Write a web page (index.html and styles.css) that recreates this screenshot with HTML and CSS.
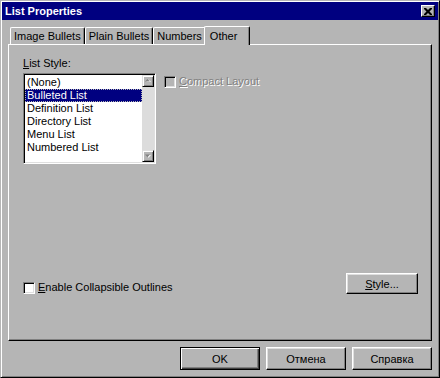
FILE: index.html
```html
<!DOCTYPE html>
<html lang="en">

<head>
    <meta charset="UTF-8">
    <title>List Properties</title>
    <link rel="stylesheet" href="styles.css">
</head>

<body>

    <div class="window">

        <div class="titlebar">
            <span class="title">List Properties</span>
            <button class="close">
                <svg width="8" height="7" viewBox="0 0 8 7">
                    <path d="M0 0h2l2 2 2-2h2v1l-2.5 2.5 2.5 2.5v1h-2l-2-2-2 2h-2v-1l2.5-2.5-2.5-2.5z" fill="#000"/>
                </svg>
            </button>
        </div>

        <div class="tabs">
            <div class="tab">Image Bullets</div>
            <div class="tab">Plain Bullets</div>
            <div class="tab">Numbers</div>
            <div class="tab active">Other</div>
        </div>

        <div class="panel">

            <div class="top-row">
                <div class="list-group">
                    <div class="label"><u>L</u>ist Style:</div>
                    <div class="listbox">
                        <ul class="items">
                            <li>(None)</li>
                            <li class="selected">Bulleted List</li>
                            <li>Definition List</li>
                            <li>Directory List</li>
                            <li>Menu List</li>
                            <li>Numbered List</li>
                        </ul>
                        <div class="scrollbar">
                            <div class="arrow">
                                <svg width="6" height="4" viewBox="0 0 6 4">
                                    <path d="M1 3h5l-2.5-2.5z" fill="#fff"/>
                                    <path d="M0 2.5h5l-2.5-2.5z" fill="#808080"/>
                                </svg>
                            </div>
                            <div class="track"></div>
                            <div class="arrow">
                                <svg width="6" height="4" viewBox="0 0 6 4">
                                    <path d="M1 1h5l-2.5 2.8z" fill="#fff"/>
                                    <path d="M0 0.5h5l-2.5 2.8z" fill="#808080"/>
                                </svg>
                            </div>
                        </div>
                    </div>
                </div>

                <label class="check disabled">
                    <span class="box"></span>
                    <span><u>C</u>ompact Layout</span>
                </label>
            </div>

            <div class="bottom-row">
                <label class="check">
                    <span class="box"></span>
                    <span><u>E</u>nable Collapsible Outlines</span>
                </label>
                <button class="btn style-btn"><u>S</u>tyle...</button>
            </div>

        </div>

        <div class="buttons">
            <button class="btn default">OK</button>
            <button class="btn">Отмена</button>
            <button class="btn">Справка</button>
        </div>

    </div>

</body>

</html>
```

FILE: styles.css
```css
* {
    box-sizing: border-box;
}

body {
    margin: 0;
    background-color: #b5b5b5;
    font-family: "Liberation Sans", Arial, sans-serif;
    font-size: 11px;
    line-height: 13px;
    color: #000;
}

.window {
    width: 440px;
    height: 378px;
    padding: 1px;
    border: 1px solid;
    border-color: #b5b5b5 #000 #000 #b5b5b5;
    box-shadow: inset 1px 1px #fff, inset -1px -1px #808080;
    display: flex;
    flex-direction: column;
}

/* title bar */

.titlebar {
    height: 18px;
    background-color: #000080;
    color: #fff;
    display: flex;
    align-items: center;
    justify-content: space-between;
    padding: 0 3px;
}

.title {
    font-weight: bold;
}

.close {
    width: 14px;
    height: 12px;
    padding: 0;
    border: 1px solid;
    border-color: #fff #000 #000 #fff;
    box-shadow: inset -1px -1px #808080;
    background-color: #b5b5b5;
    display: flex;
    align-items: center;
    justify-content: center;
}

/* tabs */

.tabs {
    height: 18px;
    margin: 6px 6px 0;
    padding-left: 2px;
    display: flex;
    align-items: flex-end;
}

.tab {
    height: 17px;
    padding: 0 3px;
    border-top: 1px solid #fff;
    border-left: 1px solid #fff;
    border-right: 1px solid #000;
    border-radius: 2px 2px 0 0;
    box-shadow: inset -1px 0 #808080;
    line-height: 17px;
    white-space: nowrap;
}

.tab.active {
    position: relative;
    z-index: 1;
    width: 46px;
    height: 19px;
    margin-left: -2px;
    margin-bottom: -1px;
    padding-left: 5px;
    background-color: #b5b5b5;
    line-height: 19px;
}

/* panel */

.panel {
    height: 297px;
    margin: 0 6px;
    padding: 12px 13px 46px 14px;
    border: 1px solid;
    border-color: #fff #000 #000 #fff;
    box-shadow: inset -1px -1px #808080;
    display: flex;
    flex-direction: column;
}

.top-row {
    display: flex;
    gap: 8px;
}

.label {
    margin-bottom: 3px;
}

.listbox {
    width: 133px;
    height: 91px;
    border: 1px solid;
    border-color: #808080 #fff #fff #808080;
    box-shadow: inset 1px 1px #000, inset -1px -1px #dfdfdf;
    background-color: #fff;
    padding: 1px;
    display: flex;
}

.items {
    flex: 1;
    list-style: none;
    margin: 0;
    padding: 1px 0 0;
}

.items li {
    height: 13px;
    padding-left: 2px;
    white-space: nowrap;
}

.items .selected {
    background-color: #000080;
    color: #fff;
    outline: 1px dotted #b5b5b5;
    outline-offset: -1px;
}

.scrollbar {
    width: 12px;
    display: flex;
    flex-direction: column;
}

.arrow {
    height: 12px;
    background-color: #b5b5b5;
    border: 1px solid;
    border-color: #dfdfdf #000 #000 #dfdfdf;
    box-shadow: inset 1px 1px #fff, inset -1px -1px #808080;
    display: flex;
    align-items: center;
    justify-content: center;
}

.track {
    flex: 1;
    background-color: #dcdcdc;
}

.check {
    display: flex;
    align-items: center;
    gap: 3px;
    white-space: nowrap;
}

.top-row .check {
    align-self: flex-start;
    margin-top: 18px;
}

.box {
    width: 12px;
    height: 12px;
    border: 1px solid;
    border-color: #808080 #fff #fff #808080;
    box-shadow: inset 1px 1px #000, inset -1px -1px #dfdfdf;
    background-color: #fff;
}

.check.disabled {
    color: #808080;
    text-shadow: 1px 1px #fff;
}

.check.disabled .box {
    background-color: #b5b5b5;
}

.bottom-row {
    margin-top: auto;
    display: flex;
    justify-content: space-between;
    align-items: flex-start;
}

.bottom-row .check {
    margin-top: 8px;
}

/* buttons */

.btn {
    font-family: inherit;
    font-size: 11px;
    color: #000;
    background-color: #b5b5b5;
    border: 1px solid;
    border-color: #fff #000 #000 #fff;
    box-shadow: inset -1px -1px #808080, inset 1px 1px #dfdfdf;
    padding: 0;
}

.style-btn {
    width: 72px;
    height: 21px;
}

.buttons {
    margin-top: 6px;
    padding-right: 6px;
    display: flex;
    justify-content: flex-end;
    gap: 6px;
}

.buttons .btn {
    width: 80px;
    height: 23px;
}

.btn.default {
    border-color: #000;
    box-shadow: inset 1px 1px #fff, inset -1px -1px #404040, inset -2px -2px #808080;
}
```
